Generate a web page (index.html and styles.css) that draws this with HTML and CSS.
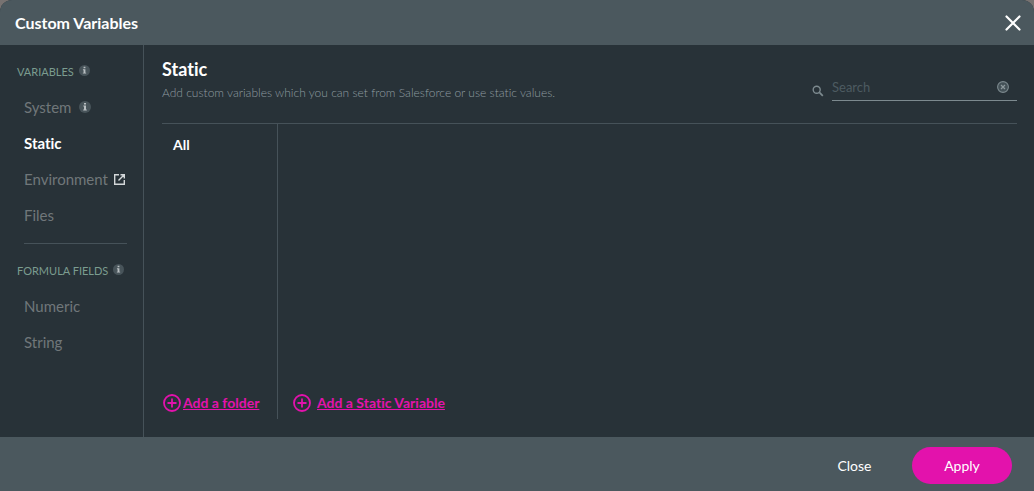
FILE: index.html
```html
<!DOCTYPE html>
<html lang="en">
<head>
<meta charset="utf-8">
<title>Custom Variables</title>
<link rel="stylesheet" href="styles.css">
</head>
<body>
<svg class="sprite" aria-hidden="true">
  <symbol id="info" viewBox="0 0 12 12">
    <circle cx="6" cy="6" r="6" fill="#48545a"/>
    <path d="M5 2h2v1.6H5zM4.3 4.600H7v3.800h.8v1H4.200v-1H5V5.600h-.7z" fill="#b9bfc2"/>
  </symbol>
  <symbol id="plus" viewBox="0 0 18 18">
    <path d="M9 1a8 8 0 1 0 0 16A8 8 0 0 0 9 1zM9 4.500v9M4.500 9h9" fill="none" stroke="currentColor" stroke-width="1.800"/>
  </symbol>
</svg>
<main class="dialog">
  <header class="dialog-header">
    <h1 class="dialog-title">Custom Variables</h1>
    <button class="close-icon" type="button" aria-label="Close dialog">
      <svg width="16" height="16" viewBox="0 0 16 16"><path d="M1.500 1.500l13 13M14.500 1.500l-13 13" stroke="#fff" stroke-width="2.200" stroke-linecap="round"/></svg>
    </button>
  </header>
  <div class="dialog-body">
    <nav class="sidebar">
      <h2 class="group-title">VARIABLES <svg class="info"><use href="#info"/></svg></h2>
      <ul class="group">
        <li><a class="nav-link" href="#system">System <svg class="info-inline"><use href="#info"/></svg></a></li>
        <li><a class="nav-link active" href="#static">Static</a></li>
        <li><a class="nav-link external" href="#environment">Environment
          <svg width="11" height="11" viewBox="0 0 11 11" fill="none" stroke="#d3d7d9" stroke-width="1.400"><path d="M5 .7H.7v9.600h9.600V6M6.500.7h3.800v3.800M10.200.8L4.500 6.500"/></svg></a></li>
        <li><a class="nav-link" href="#files">Files</a></li>
      </ul>
      <h2 class="group-title">FORMULA FIELDS <svg class="info"><use href="#info"/></svg></h2>
      <ul class="group">
        <li><a class="nav-link" href="#numeric">Numeric</a></li>
        <li><a class="nav-link" href="#string">String</a></li>
      </ul>
    </nav>
    <section class="content">
      <div class="content-header">
        <div>
          <h2 class="content-title">Static</h2>
          <p class="description">Add custom variables which you can set from Salesforce or use static values.</p>
        </div>
        <div class="search">
          <label class="search-label" for="search" aria-label="Search variables">
            <svg width="12" height="12" viewBox="0 0 12 12" fill="none" stroke="#7d8a8f"><circle cx="4.700" cy="4.700" r="3.500" stroke-width="1.400"/><path d="M7.400 7.400l3.400 3.400" stroke-width="1.800"/></svg>
          </label>
          <div class="search-field">
            <input class="search-input" id="search" type="text" placeholder="Search">
            <button class="clear" type="button" aria-label="Clear search">
              <svg width="12" height="12" viewBox="0 0 12 12"><circle cx="6" cy="6" r="5.400" fill="#445157" stroke="#7d8a8f" stroke-width="1.100"/><path d="M4 4l4 4M8 4L4 8" stroke="#8d999d" stroke-width="1.200"/></svg>
            </button>
          </div>
        </div>
      </div>
      <div class="panes">
        <div class="folders">
          <a class="folder" href="#all">All</a>
          <button class="add" type="button"><svg class="plus"><use href="#plus"/></svg><span class="add-text">Add a folder</span></button>
        </div>
        <div class="variables">
          <button class="add spaced" type="button"><svg class="plus"><use href="#plus"/></svg><span class="add-text">Add a Static Variable</span></button>
        </div>
      </div>
    </section>
  </div>
  <footer class="dialog-footer">
    <button class="button" type="button">Close</button>
    <button class="button primary" type="button">Apply</button>
  </footer>
</main>
</body>
</html>
```
FILE: styles.css
```css
* { box-sizing: border-box; }
body { margin: 0; background: #777271; font-family: Lato, sans-serif; font-variant-ligatures: none; }
h1, h2, p, ul { margin: 0; padding: 0; }
ul { list-style: none; }
button { border: 0; padding: 0; background: none; font: inherit; font-variant-ligatures: none; cursor: pointer; }
a { color: inherit; text-decoration: none; }
svg { flex: none; }
.sprite { position: absolute; width: 0; height: 0; }

.dialog { min-height: 100vh; display: flex; flex-direction: column; background: #283238; border-radius: 12px 12px 0 0; overflow: hidden; }
.dialog-header { height: 45px; padding: 0 13px 0 15px; background: #4b585e; display: flex; align-items: center; justify-content: space-between; }
.dialog-title { color: #fff; font-size: 16px; line-height: 20px; }
.close-icon { display: flex; }

.dialog-body { flex: 1; display: flex; }
.sidebar { width: 144px; padding: 20px 16px 0 17px; border-right: 1px solid #465259; }
.group-title { display: flex; gap: 5px; color: #7b9c8f; font-size: 11px; font-weight: 400; line-height: 14px; white-space: nowrap; }
.info { width: 11px; height: 11px; }
.info-inline { width: 12px; height: 12px; }
.group { margin-left: 7px; padding: 10px 0; }
.group:first-of-type { border-bottom: 1px solid #465259; margin-bottom: 20px; }
.nav-link { display: flex; align-items: center; gap: 8px; height: 36px; color: #70777a; font-size: 15px; }
.nav-link.external { gap: 6px; }
.nav-link.active { color: #fff; font-weight: 700; }

.content { flex: 1; display: flex; flex-direction: column; padding: 11px 17px 18px 18px; }
.content-header { height: 68px; border-bottom: 1px solid #465259; display: flex; justify-content: space-between; }
.content-title { color: #fff; font-size: 18px; line-height: 27px; }
.description { color: #8f9ca0; font-size: 12px; font-weight: 300; line-height: 20px; }
.search { display: flex; gap: 8px; padding-top: 17px; }
.search-label { padding-top: 8px; }
.search-field { width: 185px; height: 28px; padding-right: 8px; border-bottom: 1px solid #7d8a8f; display: flex; align-items: center; }
.search-input { flex: 1; min-width: 0; border: 0; padding: 0; background: none; color: #fff; font: 13px/20px Lato, sans-serif; outline: 0; }
.search-input::placeholder { color: #4d5b61; opacity: 1; }
.clear { display: flex; }

.panes { flex: 1; display: flex; }
.folders { width: 116px; border-right: 1px solid #465259; display: flex; flex-direction: column; justify-content: space-between; align-items: flex-start; padding: 11px 0 7px 1px; }
.folder { margin-left: 10px; color: #fff; font-size: 14px; font-weight: 700; line-height: 20px; }
.variables { flex: 1; display: flex; align-items: flex-end; padding: 0 0 7px 15px; }
.add { display: flex; align-items: center; gap: 2px; color: #e312ac; font-size: 14px; line-height: 18px; font-weight: 700; white-space: nowrap; }
.add.spaced { gap: 6px; }
.plus { width: 18px; height: 18px; }
.add-text { text-decoration: underline; }

.dialog-footer { height: 54px; padding: 10px 22px 7px; background: #4b585e; display: flex; align-items: center; justify-content: flex-end; gap: 25px; }
.button { width: 65px; height: 37px; color: #fff; font-size: 14px; }
.button.primary { width: 100px; border-radius: 19px; background: #e312ac; }
```
